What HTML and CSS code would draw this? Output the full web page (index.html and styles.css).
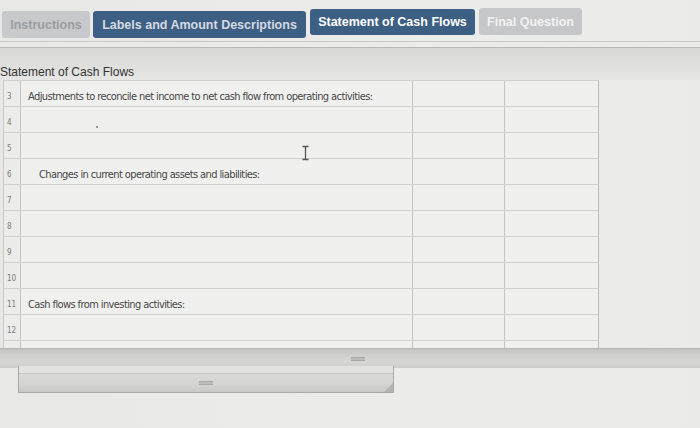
FILE: index.html
```html
<!DOCTYPE html>
<html>
<head>
<meta charset="utf-8">
<link rel="stylesheet" href="styles.css">
</head>
<body>
<div class="page">
  <div class="tabs">
    <div class="tab tab-off tab-instr">Instructions</div>
    <div class="tab tab-on tab-labels">Labels and Amount Descriptions</div>
    <div class="tab tab-on tab-active">Statement of Cash Flows</div>
    <div class="tab tab-off tab-final">Final Question</div>
  </div>
  <div class="rule rule-a"></div>
  <div class="rule rule-b"></div>
  <div class="title-band"><span class="title">Statement of Cash Flows</span></div>
  <div class="sheet-area">
    <div class="sheet">
      <div class="row"><div class="num">3</div><div class="lbl">Adjustments to reconcile net income to net cash flow from operating activities:</div><div class="amt"></div><div class="amt"></div></div>
      <div class="row"><div class="num">4</div><div class="lbl"><span class="dot"></span></div><div class="amt"></div><div class="amt"></div></div>
      <div class="row"><div class="num">5</div><div class="lbl"></div><div class="amt"></div><div class="amt"></div></div>
      <div class="row"><div class="num">6</div><div class="lbl indent">Changes in current operating assets and liabilities:</div><div class="amt"></div><div class="amt"></div></div>
      <div class="row"><div class="num">7</div><div class="lbl"></div><div class="amt"></div><div class="amt"></div></div>
      <div class="row"><div class="num">8</div><div class="lbl"></div><div class="amt"></div><div class="amt"></div></div>
      <div class="row"><div class="num">9</div><div class="lbl"></div><div class="amt"></div><div class="amt"></div></div>
      <div class="row"><div class="num">10</div><div class="lbl"></div><div class="amt"></div><div class="amt"></div></div>
      <div class="row"><div class="num">11</div><div class="lbl">Cash flows from investing activities:</div><div class="amt"></div><div class="amt"></div></div>
      <div class="row"><div class="num">12</div><div class="lbl"></div><div class="amt"></div><div class="amt"></div></div>
      <div class="row"><div class="num"></div><div class="lbl"></div><div class="amt"></div><div class="amt"></div></div>
    </div>
    <svg class="cursor" width="9" height="16" viewBox="0 0 9 16"><path d="M1.5 1.5h6M4.5 1.5v13M1.5 14.5h6" stroke="#555" stroke-width="1.3" fill="none"/></svg>
  </div>
  <div class="hscroll"><span class="grip"></span></div>
  <div class="lower-bar">
    <div class="lower-top"></div>
    <div class="lower-bottom"><span class="grip"></span><span class="resize"></span></div>
  </div>
</div>
</body>
</html>
```

FILE: styles.css
```css
html, body {
  margin: 0;
  padding: 0;
}
body {
  background: #ebebea;
  width: 700px;
  height: 428px;
  overflow: hidden;
  font-family: "Liberation Sans", Arial, sans-serif;
}
.page {
  display: flex;
  flex-direction: column;
  background: linear-gradient(90deg, #e8e8e7 0%, #ececeb 60%, #eaeae9 100%);
  height: 428px;
}
.tabs {
  display: flex;
  align-items: flex-start;
  gap: 4px;
  padding: 9px 0 0 2px;
  height: 31px;
  box-sizing: border-box;
}
.tab {
  height: 27px;
  box-sizing: border-box;
  border-radius: 3px;
  font-weight: bold;
  font-size: 12.5px;
  display: flex;
  align-items: center;
  justify-content: center;
  white-space: nowrap;
}
.tab-off {
  background: #c8c9ca;
}
.tab-on {
  background: #3e5f84;
}
.tab-instr {
  width: 88px;
  margin-top: 2px;
  color: #9a9ea2;
  margin-right: -1px;
}
.tab-labels {
  width: 213px;
  margin-top: 2px;
  color: #d4dae2;
}
.tab-active {
  width: 165px;
  color: #ffffff;
  height: 26px;
}
.tab-final {
  width: 103px;
  margin-top: -1px;
  color: #f2f2f2;
  background: #c6c7c8;
}
.rule {
  height: 1px;
}
.rule-a {
  margin-top: 10px;
  background: #c8c8c8;
}
.rule-b {
  margin-top: 5px;
  background: #b9b9b9;
}
.title-band {
  height: 32px;
  box-sizing: border-box;
  background: linear-gradient(180deg, #d8d8d7 0%, #dfdfde 55%, #e6e6e5 100%);
  display: flex;
  align-items: flex-end;
  padding: 0 0 1px 0;
}
.title {
  font-size: 12px;
  color: #333;
  line-height: 14px;
}
.sheet-area {
  position: relative;
  height: 268px;
  overflow: hidden;
}
.sheet {
  margin-left: 3px;
  width: 594px;
  border-left: 1px solid #c9c9c9;
  border-right: 1px solid #bdbdbd;
  background: #f0f0ef;
}
.row {
  display: grid;
  grid-template-columns: 17px 392px 92px 92px;
  height: 26px;
  box-sizing: border-box;
  border-top: 1px solid #d0d0cf;
}
.row > div {
  border-right: 1px solid #c4c4c3;
  box-sizing: border-box;
  display: flex;
  align-items: center;
  padding-top: 5px;
}
.row > div:last-child {
  border-right: none;
}
.num {
  font-family: "DejaVu Sans Condensed", sans-serif;
  font-size: 8px;
  color: #7a7a7a;
  padding-left: 3px;
  background: #ececeb;
}
.lbl {
  font-family: "DejaVu Sans Condensed", sans-serif;
  font-size: 11px;
  letter-spacing: -0.6px;
  color: #484848;
  padding-left: 7px;
  white-space: nowrap;
}
.lbl.indent {
  padding-left: 18px;
}
.dot {
  display: block;
  width: 2px;
  height: 2px;
  background: #999;
  margin-left: 68px;
  margin-top: 10px;
}
.cursor {
  position: absolute;
  left: 301px;
  top: 65px;
}
.hscroll {
  height: 20px;
  background: linear-gradient(180deg, #c4c4c3 0%, #cfcfce 30%, #d6d6d5 70%, #cdcdcc 100%);
  border-top: 1px solid #b5b5b4;
  box-sizing: border-box;
  display: flex;
  justify-content: center;
  align-items: center;
  padding-left: 15px;
}
.grip {
  display: block;
  width: 14px;
  height: 4px;
  border-top: 1px solid #a9a9a9;
  border-bottom: 1px solid #a9a9a9;
  box-sizing: border-box;
  background: #bdbdbd;
}
.lower-bar {
  margin: -2px 0 0 18px;
  width: 376px;
  height: 27px;
  box-sizing: border-box;
  border: 1px solid #a9a9a8;
  border-top: none;
  display: flex;
  flex-direction: column;
}
.lower-top {
  height: 7px;
  background: #e2e2e1;
  border-bottom: 1px solid #c8c8c7;
}
.lower-bottom {
  flex: 1;
  background: linear-gradient(180deg, #dadad9 0%, #d3d3d2 60%, #c9c9c8 100%);
  display: flex;
  justify-content: center;
  align-items: center;
  position: relative;
}
.resize {
  position: absolute;
  right: 0;
  bottom: 0;
  width: 0;
  height: 0;
  border-left: 9px solid transparent;
  border-bottom: 9px solid #b4b4b3;
}
```
